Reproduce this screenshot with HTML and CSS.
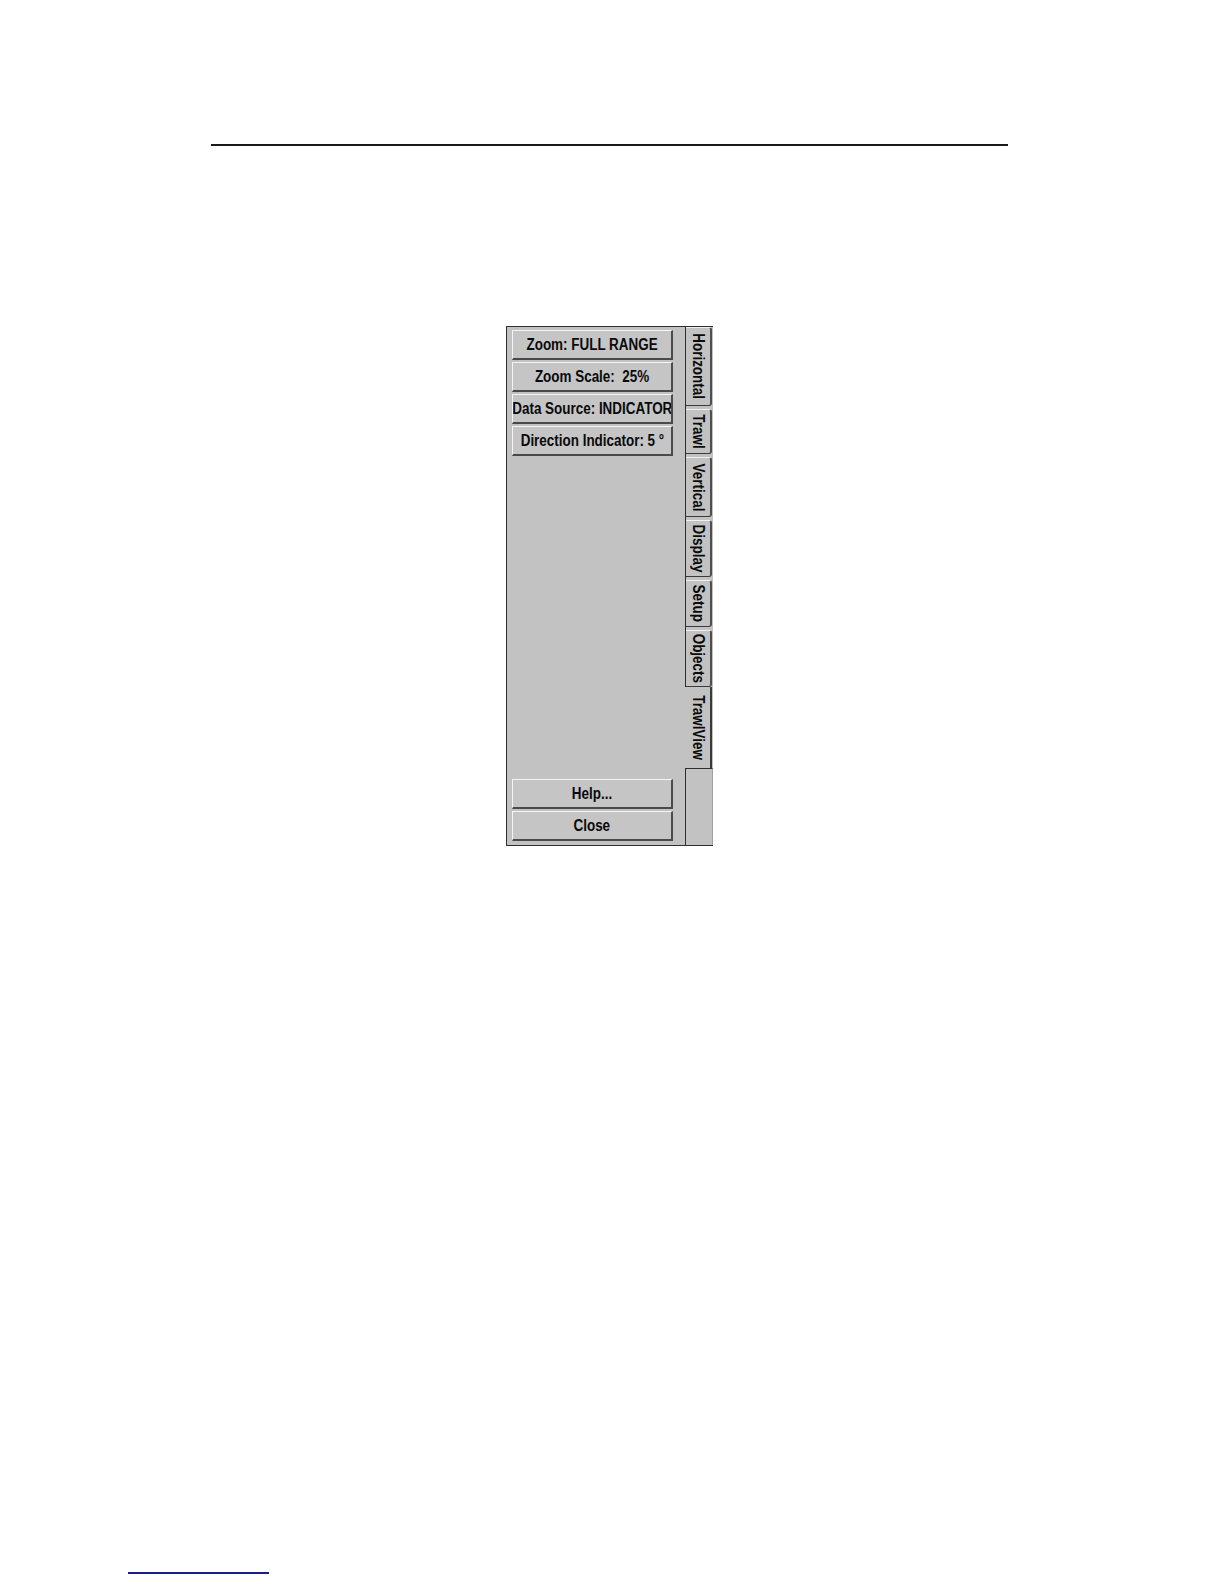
FILE: index.html
```html
<!DOCTYPE html>
<html>
<head>
<meta charset="utf-8">
<link rel="stylesheet" href="styles.css">
</head>
<body>
<div class="page">
  <div class="rule"></div>
  <div class="panel">
    <div class="content">
      <div class="group">
        <div class="btn"><span class="label">Zoom: FULL RANGE</span></div>
        <div class="btn"><span class="label">Zoom Scale:&nbsp;&nbsp;25%</span></div>
        <div class="btn"><span class="label">Data Source: INDICATOR</span></div>
        <div class="btn"><span class="label">Direction Indicator: 5 °</span></div>
      </div>
      <div class="group">
        <div class="btn"><span class="label">Help...</span></div>
        <div class="btn"><span class="label">Close</span></div>
      </div>
    </div>
    <div class="tabs">
      <div class="tab tab-horizontal"><span class="tab-label">Horizontal</span></div>
      <div class="tab tab-trawl"><span class="tab-label">Trawl</span></div>
      <div class="tab tab-vertical"><span class="tab-label">Vertical</span></div>
      <div class="tab tab-display"><span class="tab-label">Display</span></div>
      <div class="tab tab-setup"><span class="tab-label">Setup</span></div>
      <div class="tab tab-objects"><span class="tab-label">Objects</span></div>
      <div class="tab tab-active"><span class="tab-label">TrawlView</span></div>
      <div class="tab-filler"></div>
    </div>
  </div>
  <div class="footnote-rule"></div>
</div>
</body>
</html>
```

FILE: styles.css
```css
html, body {
  margin: 0;
  padding: 0;
  background: #ffffff;
}

.page {
  width: 1224px;
  height: 1584px;
  overflow: hidden;
  display: flex;
  flex-direction: column;
  align-items: flex-start;
  font-family: "Liberation Sans", Arial, sans-serif;
}

.rule {
  margin: 144px 0 0 211px;
  width: 797px;
  height: 2px;
  background: #1a1a1a;
}

.panel {
  margin: 180px 0 0 506px;
  width: 207px;
  height: 520px;
  box-sizing: border-box;
  display: flex;
  border-top: 1px solid #2e2e2e;
  border-left: 1px solid #2e2e2e;
  border-bottom: 1px solid #2e2e2e;
  background: #c2c2c2;
}

.content {
  width: 178px;
  box-sizing: border-box;
  padding: 3px 12px 4px 5px;
  display: flex;
  flex-direction: column;
  justify-content: space-between;
}

.group {
  display: flex;
  flex-direction: column;
  gap: 2px;
}

.btn {
  height: 30px;
  box-sizing: border-box;
  border-top: 1px solid #f4f4f4;
  border-left: 1px solid #f4f4f4;
  border-bottom: 2px solid #4a4a4a;
  border-right: 2px solid #4a4a4a;
  background: #c5c5c5;
  color: #0a0a0a;
  display: flex;
  align-items: center;
  justify-content: center;
  overflow: hidden;
}

.label {
  display: inline-block;
  flex: none;
  font-weight: bold;
  font-size: 16px;
  line-height: 20px;
  white-space: nowrap;
  transform: scaleX(0.84);
}

.tabs {
  width: 28px;
  box-sizing: border-box;
  border-left: 1px solid #2e2e2e;
  display: flex;
  flex-direction: column;
  gap: 3px;
}

.tab {
  flex: none;
  box-sizing: border-box;
  width: 26px;
  background: #c2c2c2;
  border-top: 1px solid #f0f0f0;
  border-right: 2px solid #4e4e4e;
  border-bottom: 1px solid #3a3a3a;
  border-radius: 0 3px 3px 0;
  color: #0a0a0a;
  display: flex;
  align-items: center;
  justify-content: center;
  overflow: hidden;
}

.tab-label {
  flex: none;
  writing-mode: vertical-rl;
  font-weight: bold;
  font-size: 16px;
  line-height: 20px;
  white-space: nowrap;
  transform: scaleY(0.84);
}

.tab-horizontal { height: 79px; }
.tab-trawl { height: 45px; }
.tab-vertical { height: 60px; }
.tab-display { height: 57px; }
.tab-setup { height: 47px; }
.tab-objects { height: 57px; }

.tab-active {
  height: 81px;
  margin-left: -1px;
  width: 27px;
  margin-top: -3px;
  border-top: none;
  border-bottom: none;
  border-right: 2px solid #3a3a3a;
  border-radius: 0;
}

.tab-filler {
  flex: 1;
  margin-top: -3px;
  width: 27px;
  box-sizing: border-box;
  border-top: 1px solid #2e2e2e;
  border-right: 1px solid #a0a0a0;
  background: #c2c2c2;
}

.footnote-rule {
  margin: 726px 0 0 128px;
  width: 141px;
  height: 2px;
  background: #1c1c8c;
}
```
